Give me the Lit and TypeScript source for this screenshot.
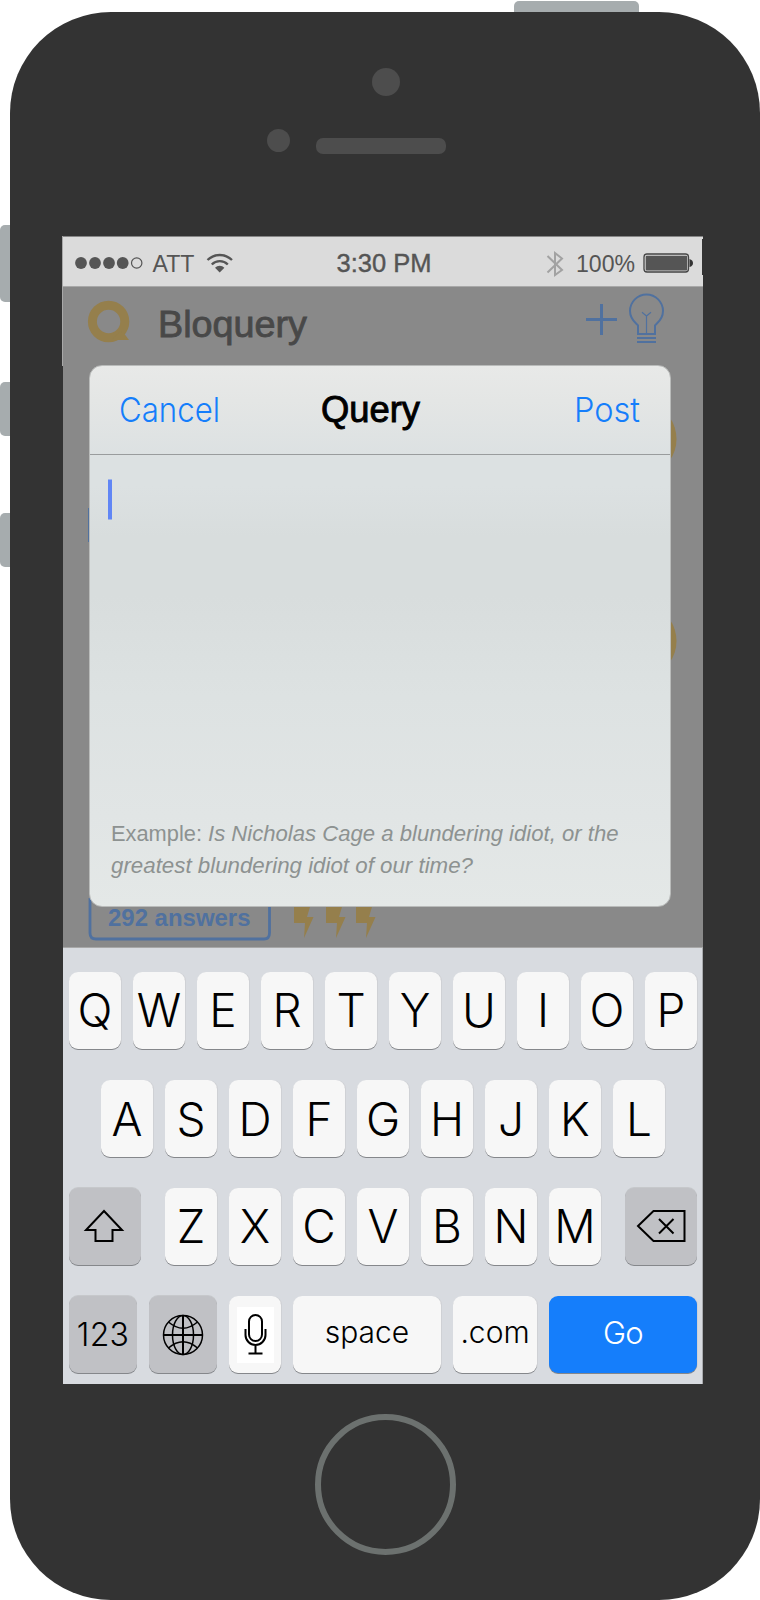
import { LitElement, html, css, svg } from "lit";

const letterRow = (s: string) => s.split("").map((c) => html`<div class="key">${c}</div>`);

class AppRoot extends LitElement {
  static styles = css`
    :host { display: block; width: 760px; height: 1600px; background: #fff; position: relative; overflow: hidden;
      font-family: "Liberation Sans", Arial, sans-serif; }
    * { box-sizing: border-box; }
    svg { display: block; flex: none; }
    .hw { position: absolute; background: #a6acae; }
    .power { left: 514px; top: 1px; width: 124.5px; height: 20px; border-radius: 5px; }
    .mute { left: 0; top: 225px; width: 20px; height: 77px; border-radius: 5px; }
    .up { left: 0; top: 382px; width: 20px; height: 54px; border-radius: 5px; }
    .down { left: 0; top: 513px; width: 20px; height: 54px; border-radius: 5px; }
    .body { position: absolute; left: 10px; top: 12px; width: 749.5px; height: 1588px; background: #333; border-radius: 101px;
      display: flex; flex-direction: column; padding: 224px 0 0 53px; }
    .sensor { position: absolute; background: #4d4d4d; border-radius: 50%; }
    .camera { left: 362px; top: 56px; width: 28px; height: 28px; }
    .light { left: 257px; top: 117px; width: 23px; height: 23px; }
    .speaker { left: 306px; top: 126px; width: 130px; height: 16px; border-radius: 7px; }
    .home { position: absolute; left: 304.6px; top: 1401.7px; width: 141px; height: 141px; border-radius: 50%; border: 6px solid #6c716f; }
    .screen { width: 640px; height: 1148px; display: flex; flex-direction: column; position: relative; }
    .edge { position: absolute; left: -1px; top: 0; width: 1px; height: 130px; background: #a8a8a8; }
    .edge-right { position: absolute; left: 639px; top: 3px; width: 1px; height: 36px; background: #333; }
    .status { height: 50px; background: #dbdbdb; border-top: 1px solid #868686; }
    .app { height: 662px; background: #898989; position: relative; border-top: 1px solid #a8a8a8; border-bottom: 1px solid #a8a8a8; }
    .modal { position: absolute; left: 26px; top: 78px; width: 582px; height: 542px; border-radius: 13px; border: 1px solid #b9bbba;
      background: linear-gradient(#e8e9e8 0, #e4e6e5 35px, #dce1e2 90px, #dce1e2 120px, #d8dddd 170px, #d8dddd 230px, #dde2e2 330px, #e1e5e5 450px, #e4e8e7 100%); }
    .bar { height: 89px; border-bottom: 1px solid #999c9d; }
    .lay { position: absolute; left: 0; top: 0; }
    .kb { height: 436px; background: #d8dbe0; border-right: 1px solid #a9abae; padding: 24px 0 0 6px; display: flex; flex-direction: column; gap: 30px; }
    .row { display: flex; gap: 12px; height: 78px; }
    .row.second { padding-left: 32px; }
    .key { width: 52px; height: 77px; border-radius: 9px; background: #f7f7f7; box-shadow: 0 1px 0 #85878b, 1px 0 0 #cfd1d5;
      display: flex; align-items: center; justify-content: center; font: 300 46px Inter, "Liberation Sans", sans-serif; color: #000; flex: none; }
    .lift .key { padding-bottom: 2px; }
    .gray { background: #c0c1c5; box-shadow: 0 1px 0 #85878b, 0 -1px 0 #c6c8cb; }
    .shift { width: 72px; margin-right: 12px; padding-right: 2px; }
    .del { width: 72px; margin-left: 12px; }
    .w68 { width: 68px; }
    .num { font-size: 32px; letter-spacing: .3px; }
    .space { width: 148px; }
    .com { width: 84px; }
    .go { width: 148px; background: #157efb; color: #fff; }
    .key.word { font-size: 30px; padding-bottom: 5px; }
    .key.go { font-size: 31px; letter-spacing: -.8px; }
    .mic { background: #fff; padding: 4px 6px 6px; }
  `;

  render() {
    return html`
      <div class="hw power"></div><div class="hw mute"></div><div class="hw up"></div><div class="hw down"></div>
      <div class="body">
        <div class="sensor camera"></div><div class="sensor light"></div><div class="sensor speaker"></div>
        <div class="screen">
          <div class="edge"></div>
          <div class="status">
            <svg width="640" height="49" viewBox="63 237 640 49" fill="#555">
              ${[81, 95, 109, 122.7].map((x) => svg`<circle cx=${x} cy="263" r="5.9"/>`)}
              <circle cx="136.700" cy="263" r="5.200" fill="none" stroke="#555" stroke-width="1.200"/>
              <text x="152.500" y="272" font-size="24" textLength="42" lengthAdjust="spacingAndGlyphs">ATT</text>
              <g fill="none" stroke="#555" stroke-width="2.300">
                <path d="M207.500 260a17.500 17.500 0 0 1 24.500 0M211.800 264.500a11.200 11.200 0 0 1 16 0"/>
              </g>
              <path d="M215 267.800a6.400 6.400 0 0 1 9.400 0l-4.700 4.700z"/>
              <text x="336.500" y="272" font-size="25.500" textLength="95" lengthAdjust="spacingAndGlyphs" stroke="#555" stroke-width=".4">3:30 PM</text>
              <path d="M547.500 256l14.500 14-7 5v-22l7 5.500-14.500 14" fill="none" stroke="#a2a2a2" stroke-width="2"/>
              <text x="576" y="272" font-size="24.500" textLength="59" lengthAdjust="spacingAndGlyphs">100%</text>
              <rect x="644" y="254" width="44.500" height="18" rx="3" fill="none" stroke="#444" stroke-width="1.300"/>
              <rect x="645.700" y="255.700" width="41.500" height="14.800" rx="1"/>
              <path d="M689.500 259q3.500 1 3.500 4t-3.500 4z" fill="#333"/>
            </svg>
          </div>
          <div class="edge-right"></div>
          <div class="app">
            <svg class="lay" width="640" height="660" viewBox="63 287 640 660">
              <circle cx="108.600" cy="321.500" r="16.200" fill="none" stroke="#957f4c" stroke-width="9"/>
              <g fill="#957f4c">
                <path d="M120 331l4.500 3 4.500 6h-17z"/>
                <ellipse cx="652" cy="439" rx="24.500" ry="31"/><ellipse cx="652" cy="641" rx="24.500" ry="31"/>
                ${[294, 326, 356].map((x) => svg`<path transform="translate(${x} 900)" d="M0 0h18l-5 17h6.500l-9.500 21 1-15H0z"/>`)}
              </g>
              <text x="158" y="337" font-size="36" fill="#484848" stroke="#484848" stroke-width=".8" textLength="149" lengthAdjust="spacingAndGlyphs">Bloquery</text>
              <g fill="none" stroke="#50719f">
                <path d="M586 319.500h31M601.500 304v31" stroke-width="3"/>
                <path d="M638 334v-8.500c-2.500-3-8-6-8-14.500a16.500 16.500 0 0 1 33 0c0 8.500-5.500 11.500-8 14.500v8.500z" stroke-width="2"/>
                <path d="M646.500 333v-17l-4.500-3.800M646.500 316l4.500-3.800" stroke-width="1.200"/>
                <path d="M637 338h19M637 342h19" stroke-width="2"/>
                <path d="M90 898v35q0 6 6 6h168q5.500 0 5.500-6v-45" stroke-width="2.800"/>
                <path d="M88.500 508v34" stroke-width="1"/>
              </g>
              <text x="108" y="926" font-size="24" font-weight="700" fill="#50719f" textLength="142.500" lengthAdjust="spacingAndGlyphs">292 answers</text>
            </svg>
            <div class="modal">
              <div class="bar"></div>
              <svg class="lay" width="580" height="540" viewBox="90 366 580 540">
                <g font-family="Inter" font-weight="300" fill="#157efb">
                  <text x="119" y="422" font-size="33.500" textLength="101" lengthAdjust="spacingAndGlyphs">Cancel</text>
                  <text x="574" y="422" font-size="33.500" textLength="66" lengthAdjust="spacingAndGlyphs">Post</text>
                </g>
                <text x="321" y="422" font-size="36" stroke="#000" stroke-width=".9" textLength="99" lengthAdjust="spacingAndGlyphs">Query</text>
                <rect x="108" y="479.500" width="4" height="40" fill="#6186f5"/>
                <g fill="#8d9291" font-size="22.500">
                  <text x="111" y="841" textLength="91" lengthAdjust="spacingAndGlyphs">Example:</text>
                  <text x="208" y="841" font-style="italic" textLength="410.500" lengthAdjust="spacingAndGlyphs">Is Nicholas Cage a blundering idiot, or the</text>
                  <text x="111" y="873" font-style="italic" textLength="362" lengthAdjust="spacingAndGlyphs">greatest blundering idiot of our time?</text>
                </g>
              </svg>
            </div>
          </div>
          <div class="kb">
            <div class="row lift">${letterRow("QWERTYUIOP")}</div>
            <div class="row second">${letterRow("ASDFGHJKL")}</div>
            <div class="row lift">
              <div class="key gray shift"><svg width="42" height="34" viewBox="84.500 1209 42 34" fill="none" stroke="#000" stroke-width="2"><path d="M105.500 1211l18 19h-9.500v11h-17v-11h-9.500z"/></svg></div>
              ${letterRow("ZXCVBNM")}
              <div class="key gray del"><svg width="50" height="34" viewBox="636 1209 50 34" fill="none" stroke="#000" stroke-width="2"><path d="M638 1226l15.500-15h31v30h-31zM659 1219l14.500 14.500M673.500 1219L659 1233.500"/></svg></div>
            </div>
            <div class="row">
              <div class="key gray w68 num">123</div>
              <div class="key gray w68"><svg width="42" height="42" viewBox="-21 -21 42 42" fill="none" stroke="#000" stroke-width="1.500"><circle r="19.500"/><ellipse rx="10.500" ry="19.500"/><path d="M-19.500 0h39M0-19.500v39" stroke-width="2"/><path d="M-14.500-13q14.500 12.500 29 0M-14.500 13q14.500-12.500 29 0"/></svg></div>
              <div class="key"><svg class="mic" width="37" height="56" viewBox="-12.500 0 25 44" fill="none" stroke="#000" stroke-width="2"><rect x="-6.500" y="3" width="13" height="26" rx="6.500"/><path d="M-10 17v6a10 10 0 0 0 20 0v-6M0 33v8M-7 41.500H7"/></svg></div>
              <div class="key space word">space</div>
              <div class="key com word">.com</div>
              <div class="key word go">Go</div>
            </div>
          </div>
        </div>
        <div class="home"></div>
      </div>`;
  }
}
customElements.define("app-root", AppRoot);
